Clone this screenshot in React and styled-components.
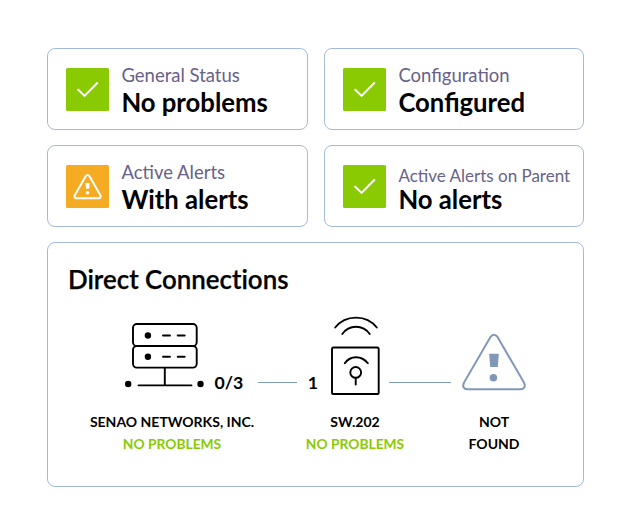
import React from "react";
import styled, { createGlobalStyle } from "styled-components";

const GlobalStyle = createGlobalStyle`
  * { box-sizing: border-box; }
  body {
    margin: 0;
    background: #fff;
    color: #000;
    font-family: Lato, sans-serif;
  }
  svg { display: block; flex: none; }
`;

const Page = styled.main`
  width: 631px;
  height: 532px;
  padding: 48px 47px 45px;
  display: grid;
  grid-template-columns: 261px 260px;
  grid-template-rows: 82px 82px 245px;
  column-gap: 16px;
  row-gap: 15px;
`;

const Card = styled.section`
  border: 1px solid #a4bbd8;
  border-radius: 8px;
  background: #fff;
`;

const StatusCard = styled(Card)`
  display: flex;
  align-items: flex-start;
  gap: 12px;
  padding: 19px 0 0 18.4px;
`;

const StatusIcon = styled.div`
  width: 43px;
  height: 43px;
  border-radius: 1.5px;
  background: ${(p) => (p.$warning ? "#f5ab22" : "#8aca02")};
`;

const StatusText = styled.div`
  display: flex;
  flex-direction: column;
  white-space: nowrap;
`;

const Label = styled.span`
  line-height: ${(p) => (p.$small ? "18px" : "20px")};
  margin-top: ${(p) => (p.$small ? "2px" : "-3px")};
  margin-bottom: ${(p) => (p.$small ? "0" : "3px")};
  font-size: ${(p) => (p.$small ? "17px" : "18.5px")};
  color: #68618a;
`;

const Value = styled.strong`
  line-height: 28px;
  font-size: 25.7px;
  font-weight: 700;
`;

const Panel = styled(Card)`
  grid-column: 1 / -1;
  display: flex;
  flex-direction: column;
`;

const Title = styled.h2`
  margin: 20px 0 0 20px;
  font-size: 25.9px;
  line-height: 32px;
  font-weight: 600;
  font-variant-ligatures: none;
  -webkit-text-stroke: 0.25px #000;
`;

const Diagram = styled.div`
  display: flex;
  align-items: flex-end;
  height: 86px;
  margin: 18px 0 0 74px;
`;

const Count = styled.span`
  width: ${(p) => p.$width}px;
  margin-right: ${(p) => p.$after || 0}px;
  margin-bottom: 5px;
  font-size: 17.7px;
  line-height: 22px;
  font-weight: 700;
  text-align: center;
`;

const Link = styled.div`
  width: ${(p) => p.$width}px;
  height: 1px;
  margin: 0 ${(p) => p.$after}px 16px ${(p) => p.$before}px;
  background: #7e9bc4;
`;

const Captions = styled.div`
  display: grid;
  grid-template-columns: 180px 186px 92px;
  margin: 12px 0 0 34px;
`;

const Caption = styled.div`
  display: flex;
  flex-direction: column;
  align-items: center;
  font-size: 14px;
  line-height: 22px;
  font-weight: 700;
  white-space: nowrap;
`;

const Ok = styled.span`
  font-size: 13.8px;
  color: #8aca02;
`;

const CheckIcon = () => (
  <svg width="43" height="43" viewBox="0 0 43 43" fill="none" stroke="#fff" strokeWidth="2" strokeLinecap="round" strokeLinejoin="round">
    <path d="M12.2 21.7 18.6 27.9 31.3 15" />
  </svg>
);

const WarningIcon = () => (
  <svg width="43" height="43" viewBox="0 0 43 43" fill="none" stroke="#fff" strokeWidth="2" strokeLinejoin="round">
    <path d="M19.8 11.1Q21.6 8.8 23.4 11.1L34.4 30.2Q35.4 33.1 32.6 33.2H10.6Q7.8 33.1 8.8 30.2Z" />
    <path d="M19.5 18h4.2l-.5 5.8H20Z" fill="#fff" stroke="none" />
    <circle cx="21.6" cy="27.8" r="1.8" fill="#fff" stroke="none" />
  </svg>
);

const ServerIcon = () => (
  <svg width="84" height="86" viewBox="122 313 84 86" fill="none" stroke="#000" strokeWidth="1.9" strokeLinecap="round">
    <rect x="133" y="324" width="63.7" height="22" rx="3.8" />
    <rect x="133" y="346" width="63.7" height="21.6" rx="3.8" />
    <path d="M163 335.5h7M177.7 335.5h7M163 356.8h7M177.7 356.8h7M164.8 368v17M138.5 385.4h53" />
    <g fill="#000" stroke="none">
      <circle cx="147.9" cy="335.5" r="3.2" />
      <circle cx="147.9" cy="356.8" r="3.2" />
      <circle cx="128.2" cy="384" r="3.2" />
      <circle cx="200.5" cy="384" r="3.2" />
    </g>
  </svg>
);

const AccessPointIcon = () => (
  <svg width="52" height="86" viewBox="330 313 52 86" fill="none" stroke="#000" strokeWidth="1.9" strokeLinecap="round">
    <path d="M335.2 327.5C345.5 314.3 366.5 314.3 376.8 327.5M342.3 334C349 324.3 363 324.3 369.7 334" />
    <rect x="332" y="347.5" width="46.7" height="46.5" rx="1.6" />
    <path d="M344.8 363.2C350.5 355.2 361.5 355.2 367.8 363.2M355.7 378v6.5" />
    <circle cx="355.7" cy="372.4" r="5.4" />
  </svg>
);

const AlertIcon = () => (
  <svg width="66" height="86" viewBox="461 313 66 86" fill="none" stroke="#8097b6" strokeWidth="2">
    <path d="M490.3 337.2Q494 332.5 497.7 337.2L524 382.6Q526.5 388.5 520.8 389.2H467.2Q461.5 388.5 464 382.6Z" />
    <path d="M489.2 353.8h9.6l-1 13.3h-7.6Z" fill="#8097b6" stroke="none" />
    <circle cx="493.4" cy="377.8" r="3.8" fill="#8097b6" stroke="none" />
  </svg>
);

const statuses = [
  { label: "General Status", value: "No problems" },
  { label: "Configuration", value: "Configured" },
  { label: "Active Alerts", value: "With alerts", warning: true },
  { label: "Active Alerts on Parent", value: "No alerts", small: true },
];

export default function App() {
  return (
    <>
      <GlobalStyle />
      <Page>
        {statuses.map((s) => (
          <StatusCard key={s.label}>
            <StatusIcon $warning={s.warning}>{s.warning ? <WarningIcon /> : <CheckIcon />}</StatusIcon>
            <StatusText>
              <Label $small={s.small}>{s.label}</Label>
              <Value>{s.value}</Value>
            </StatusText>
          </StatusCard>
        ))}
        <Panel>
          <Title>Direct Connections</Title>
          <Diagram>
            <ServerIcon />
            <Count $width={46}>0/3</Count>
            <Link $width={39} $before={6} $after={7} />
            <Count $width={18} $after={8}>1</Count>
            <AccessPointIcon />
            <Link $width={62} $before={7} $after={10} />
            <AlertIcon />
          </Diagram>
          <Captions>
            <Caption>
              <span>SENAO NETWORKS, INC.</span>
              <Ok>NO PROBLEMS</Ok>
            </Caption>
            <Caption>
              <span>SW.202</span>
              <Ok>NO PROBLEMS</Ok>
            </Caption>
            <Caption>
              <span>NOT</span>
              <span>FOUND</span>
            </Caption>
          </Captions>
        </Panel>
      </Page>
    </>
  );
}
